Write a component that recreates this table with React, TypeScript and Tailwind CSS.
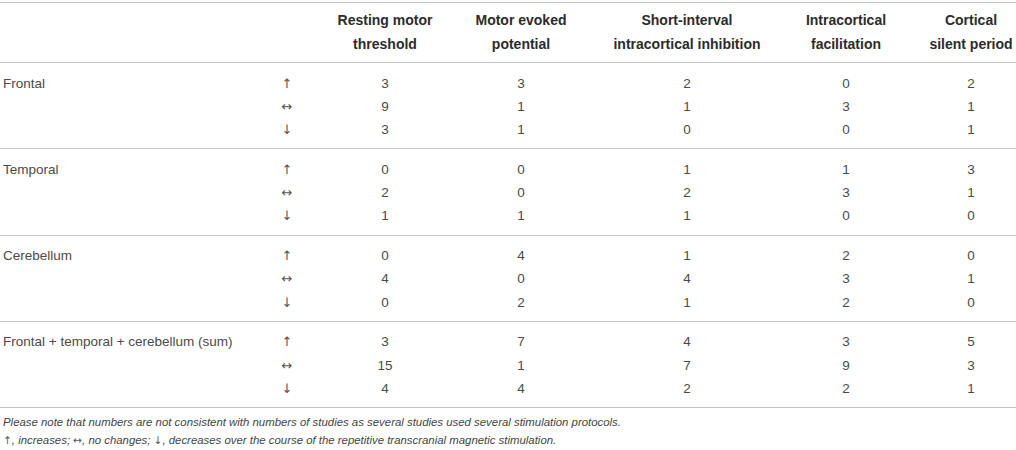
import React from "react";

type Group = {
  region: string;
  rows: [string, number[]][];
};

const HEADERS = [
  ["Resting motor", "threshold"],
  ["Motor evoked", "potential"],
  ["Short-interval", "intracortical inhibition"],
  ["Intracortical", "facilitation"],
  ["Cortical", "silent period"],
];

const GROUPS: Group[] = [
  {
    region: "Frontal",
    rows: [
      ["↑", [3, 3, 2, 0, 2]],
      ["↔", [9, 1, 1, 3, 1]],
      ["↓", [3, 1, 0, 0, 1]],
    ],
  },
  {
    region: "Temporal",
    rows: [
      ["↑", [0, 0, 1, 1, 3]],
      ["↔", [2, 0, 2, 3, 1]],
      ["↓", [1, 1, 1, 0, 0]],
    ],
  },
  {
    region: "Cerebellum",
    rows: [
      ["↑", [0, 4, 1, 2, 0]],
      ["↔", [4, 0, 4, 3, 1]],
      ["↓", [0, 2, 1, 2, 0]],
    ],
  },
  {
    region: "Frontal + temporal + cerebellum (sum)",
    rows: [
      ["↑", [3, 7, 4, 3, 5]],
      ["↔", [15, 1, 7, 9, 3]],
      ["↓", [4, 4, 2, 2, 1]],
    ],
  },
];

// same grid for header and body so the columns line up
const GRID =
  "grid grid-cols-[262px_50px_146px_126px_206px_112px_114px] w-[1016px]";

const Arrow: React.FC<{ children: string; small?: boolean }> = ({
  children,
  small,
}) => (
  <span
    className={`not-italic text-[#555] ${small ? "text-[10.5px]" : "text-[13px]"}`}
    style={{ fontFamily: '"DejaVu Sans", sans-serif' }}
  >
    {children}
  </span>
);

const App: React.FC = () => {
  return (
    <div
      className="w-[1016px] h-[450px] bg-white text-[13.5px] text-[#4a4a4a] pt-[2px]"
      style={{ fontFamily: '"Liberation Sans", Arial, sans-serif' }}
    >
      <div className={`${GRID} border-t border-b border-[#c4c4c4] pt-[5px] pb-[6px]`}>
        <div />
        <div />
        {HEADERS.map((h, i) => (
          <div
            key={i}
            className={`text-center font-bold text-[14px] leading-6 text-[#2b2b2b] ${
              i === 4 ? "pl-6" : ""
            }`}
          >
            {h[0]}
            <br />
            {h[1]}
          </div>
        ))}
      </div>

      {GROUPS.map((g) => (
        <div
          key={g.region}
          className="border-b border-[#c4c4c4] pt-[9px] pb-[6.3px]"
        >
          {g.rows.map(([arrow, values], ri) => (
            <div key={ri} className={`${GRID} h-[23.33px] items-center`}>
              <div className="pl-[3px]">{ri === 0 ? g.region : ""}</div>
              <div className="text-center">
                <Arrow>{arrow}</Arrow>
              </div>
              {values.map((v, vi) => (
                <div
                  key={vi}
                  className={`text-center ${vi === 4 ? "pl-6" : ""}`}
                >
                  {v}
                </div>
              ))}
            </div>
          ))}
        </div>
      ))}

      <div className="pl-[3px] pt-[5px] italic text-[11.4px] leading-[18px] text-[#444]">
        <p>
          Please note that numbers are not consistent with numbers of studies
          as several studies used several stimulation protocols.
        </p>
        <p>
          <Arrow small>↑</Arrow>, increases; <Arrow small>↔</Arrow>, no
          changes; <Arrow small>↓</Arrow>, decreases over the course of the
          repetitive transcranial magnetic stimulation.
        </p>
      </div>
    </div>
  );
};

export default App;
